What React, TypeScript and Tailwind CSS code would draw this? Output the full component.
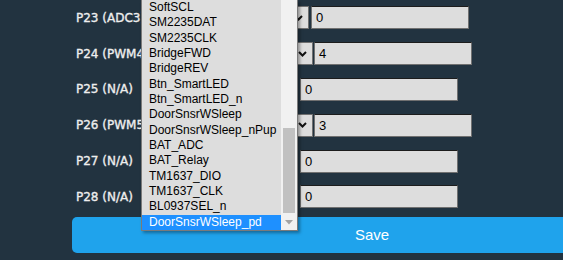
import React from "react";

const items = [
  "SoftSCL",
  "SM2235DAT",
  "SM2235CLK",
  "BridgeFWD",
  "BridgeREV",
  "Btn_SmartLED",
  "Btn_SmartLED_n",
  "DoorSnsrWSleep",
  "DoorSnsrWSleep_nPup",
  "BAT_ADC",
  "BAT_Relay",
  "TM1637_DIO",
  "TM1637_CLK",
  "BL0937SEL_n",
  "DoorSnsrWSleep_pd",
];

type Row = { label: string; value: string; selectW?: string; gap?: string };

const rows: Row[] = [
  { label: "P23 (ADC3)", value: "0", selectW: "w-[149px]", gap: "ml-[2px]" },
  { label: "P24 (PWM4)", value: "4", selectW: "w-[153px]", gap: "ml-[1px]" },
  { label: "P25 (N/A)", value: "0" },
  { label: "P26 (PWM5)", value: "3", selectW: "w-[153px]", gap: "ml-[1px]" },
  { label: "P27 (N/A)", value: "0" },
  { label: "P28 (N/A)", value: "0" },
];

function Chevron() {
  return (
    <svg width="9" height="6" viewBox="0 0 9 6">
      <path d="M1 1 L4.5 4.5 L8 1" fill="none" stroke="#111" strokeWidth="2" />
    </svg>
  );
}

function ValueInput({ value, cls }: { value: string; cls: string }) {
  return (
    <input
      readOnly
      value={value}
      className={`${cls} h-[23px] w-[158px] shrink-0 border border-[#707070] border-t-[#1c1c1c] bg-[#dddddd] pl-[4px] text-[13px] text-black outline-none font-['Liberation_Sans',Arial,sans-serif]`}
    />
  );
}

export default function App() {
  return (
    <div className="relative h-[260px] w-[563px] overflow-hidden bg-[#223340]">
      <div className="pl-[72px]">
        {rows.map((r) => (
          <div key={r.label} className="flex h-[35.8px] items-center">
            <div className="w-[88px] shrink-0 whitespace-nowrap pl-[4px] text-[12px] text-[#eeeeee] [-webkit-text-stroke:0.35px_#eeeeee] font-['DejaVu_Sans',Verdana,sans-serif]">
              {r.label}
            </div>
            {r.selectW ? (
              <>
                <div
                  className={`${r.selectW} flex h-[23px] shrink-0 items-center justify-end border border-[#707070] bg-[#dddddd] pr-[5px]`}
                >
                  <Chevron />
                </div>
                <ValueInput value={r.value} cls={r.gap ?? ""} />
              </>
            ) : (
              <ValueInput value={r.value} cls="ml-[140px]" />
            )}
          </div>
        ))}
        <button className="mt-[2px] h-[36px] w-[600px] rounded-[5px] bg-[#1fa3ec] text-[15px] text-white font-['Liberation_Sans',Arial,sans-serif]">
          Save
        </button>
      </div>

      <div className="absolute left-[141px] top-0 flex h-[231px] w-[157px] border-x border-b border-[#7a7a7a] bg-[#dddddd] shadow-[2px_2px_3px_rgba(0,0,0,0.35)] font-['Liberation_Sans',Arial,sans-serif]">
        <div className="w-[139px] overflow-hidden">
          {items.map((it, i) => (
            <div
              key={it}
              className={`h-[15.333px] whitespace-nowrap pl-[7px] text-[12px] leading-[15.333px] ${
                i === items.length - 1 ? "bg-[#1e90ff] text-white" : "text-black"
              }`}
            >
              {it}
            </div>
          ))}
        </div>
        <div className="relative w-[16px] bg-[#f1f1f1]">
          <div className="absolute left-[2px] top-[128px] h-[85px] w-[12px] bg-[#c1c1c1]" />
          <div className="absolute bottom-[5px] left-[4px]">
            <svg width="8" height="5" viewBox="0 0 8 5">
              <path d="M0 0 L8 0 L4 4.5 Z" fill="#a3a3a3" />
            </svg>
          </div>
        </div>
      </div>
    </div>
  );
}
